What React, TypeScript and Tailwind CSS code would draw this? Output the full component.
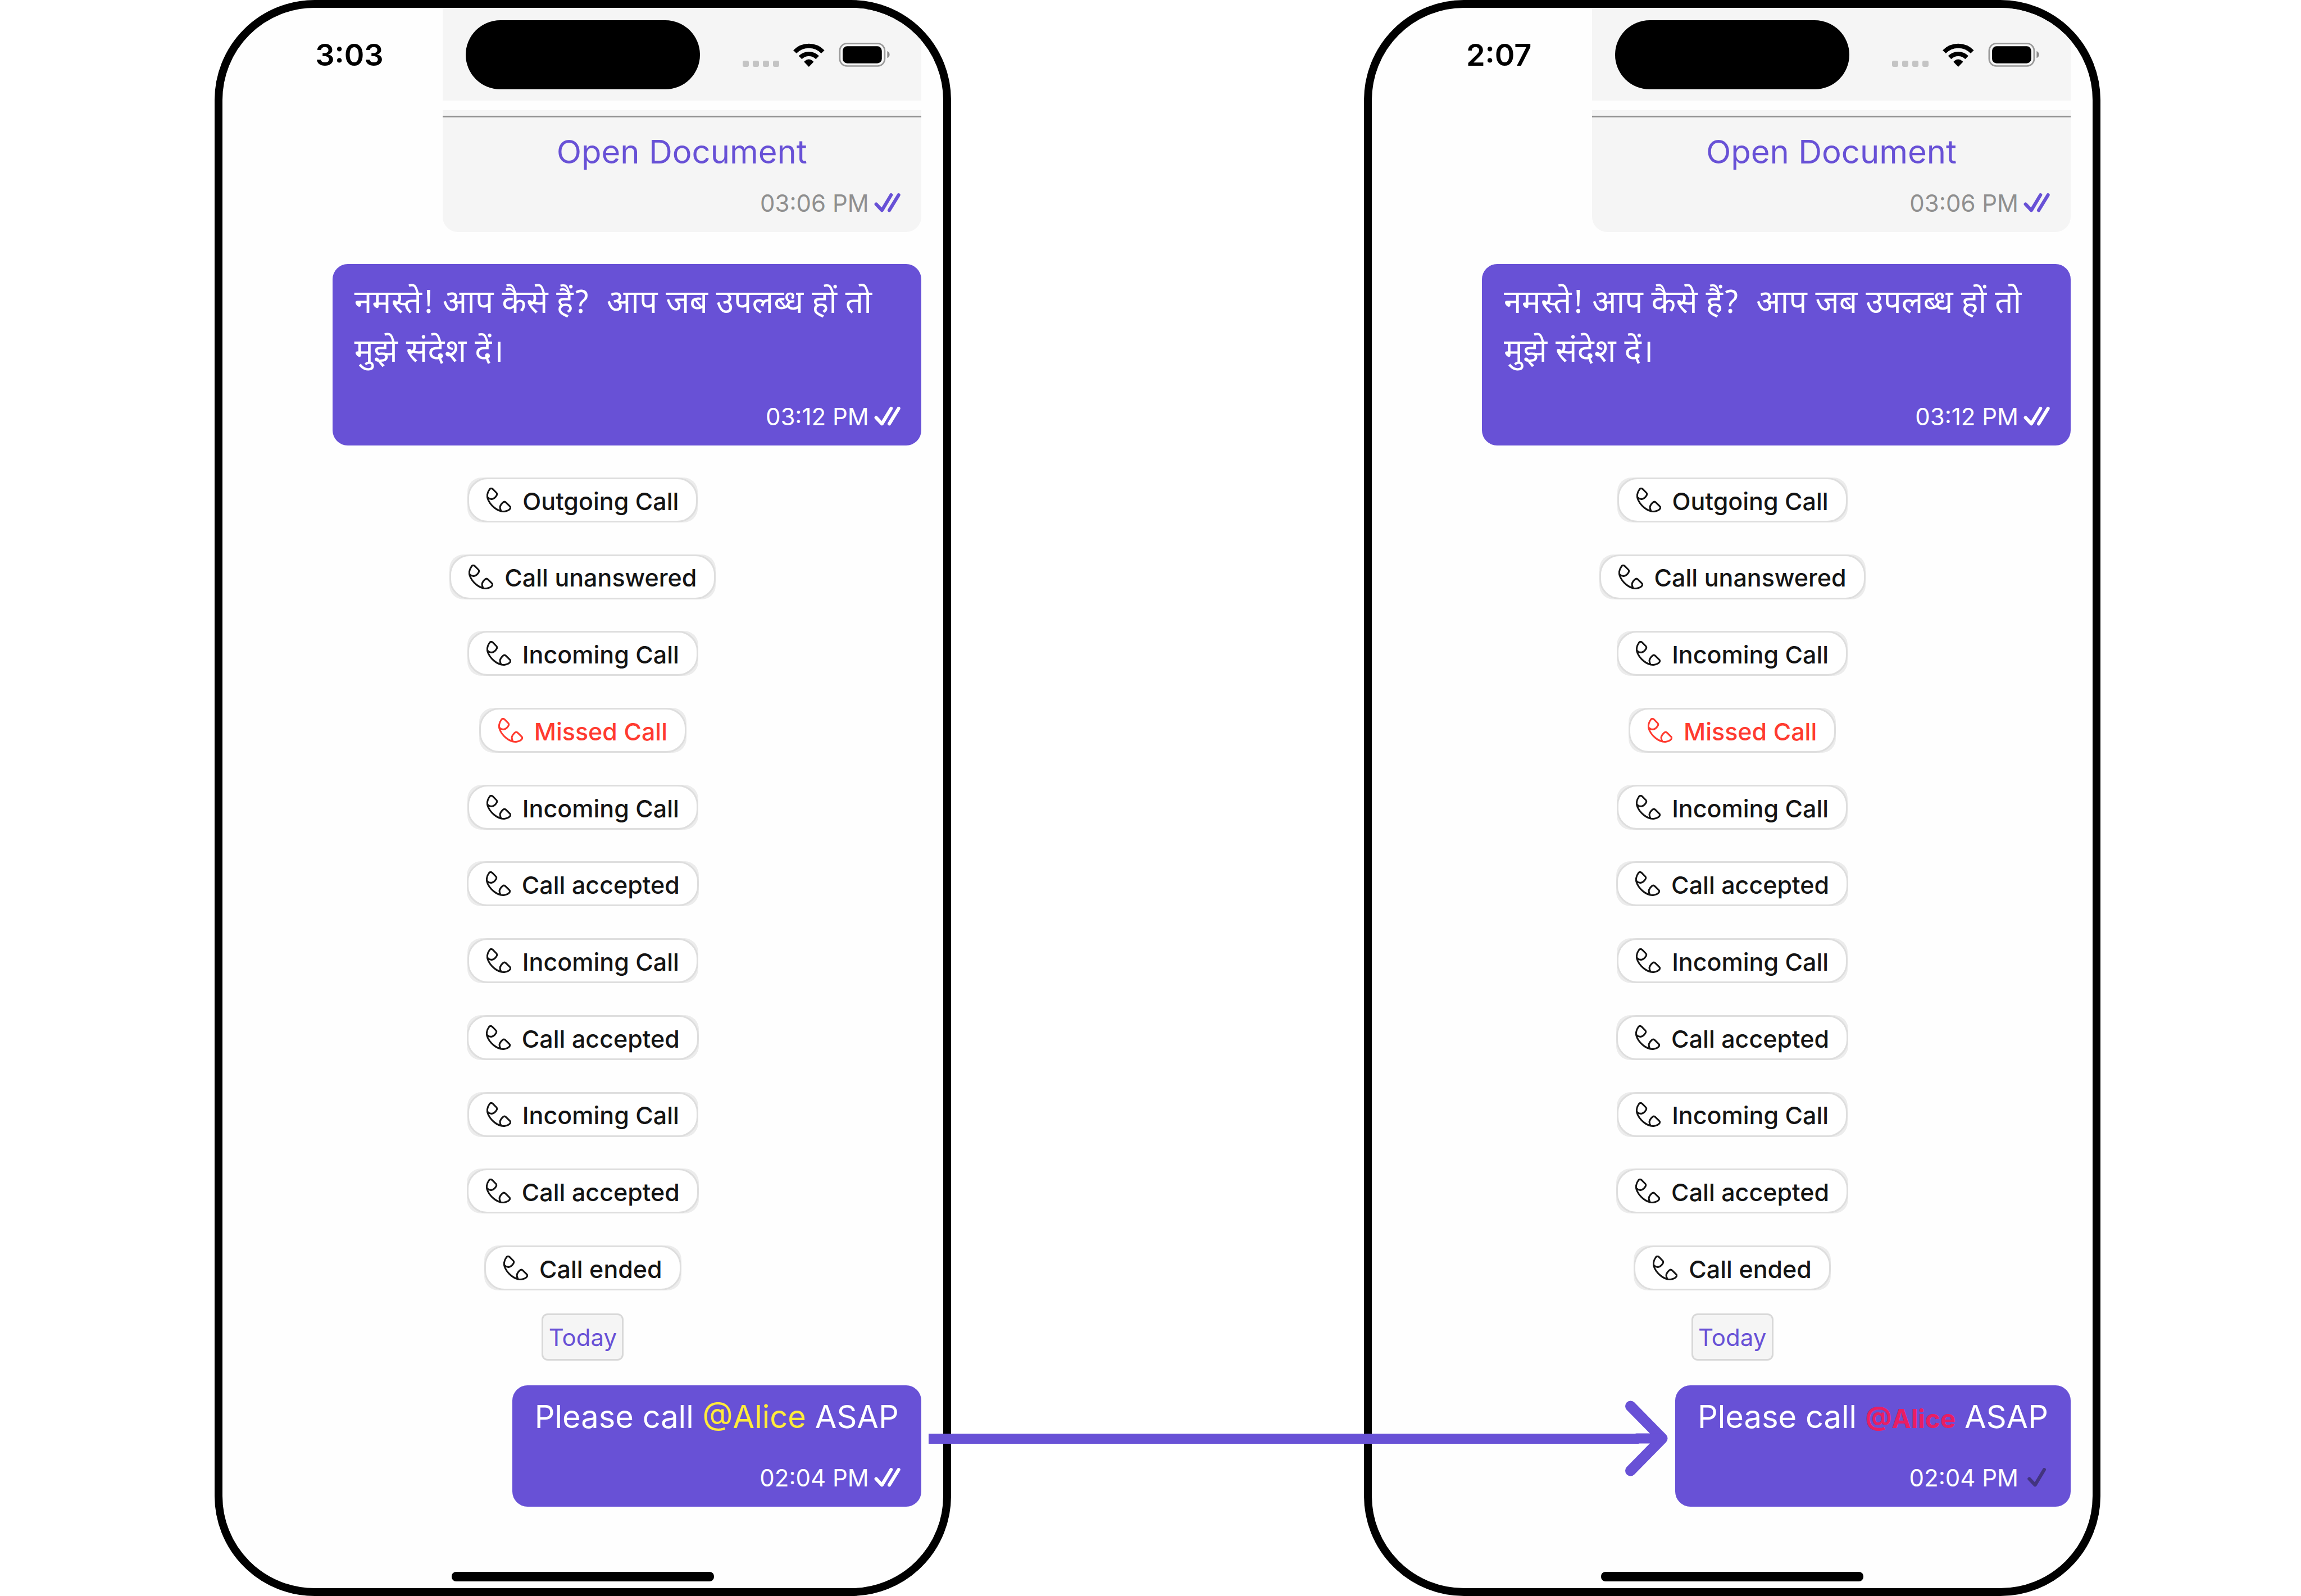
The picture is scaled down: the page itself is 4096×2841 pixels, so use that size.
import type { ReactNode } from "react";

type CallEvent = { label: string; missed?: boolean };

const calls: CallEvent[] = [
  { label: "Outgoing Call" },
  { label: "Call unanswered" },
  { label: "Incoming Call" },
  { label: "Missed Call", missed: true },
  { label: "Incoming Call" },
  { label: "Call accepted" },
  { label: "Incoming Call" },
  { label: "Call accepted" },
  { label: "Incoming Call" },
  { label: "Call accepted" },
  { label: "Call ended" },
];

function DoubleCheck() {
  return (
    <svg viewBox="0 0 155 112" className="h-[34px] w-[47px]" fill="none" stroke="currentColor" strokeWidth="20" strokeLinecap="round" strokeLinejoin="round" aria-label="Read" role="img">
      <path d="M12 64 46 100 100 10" />
      <path d="M89 100 144 10" />
    </svg>
  );
}

function SingleCheck() {
  return (
    <svg viewBox="-22 0 155 112" className="h-[34px] w-[47px]" fill="none" stroke="currentColor" strokeWidth="20" strokeLinecap="round" strokeLinejoin="round" aria-label="Sent" role="img">
      <path d="M12 64 46 100 100 10" />
    </svg>
  );
}

function PhoneIcon() {
  return (
    <svg viewBox="154 130 144 144" className="size-[44px]" fill="none" stroke="currentColor" strokeWidth="10" strokeLinecap="round" strokeLinejoin="round" aria-hidden="true">
      <path d="M163 188Q174 199 188 196 202 193 212 177 218 169 213 161L190 138Q180 130 172 140 154 165 160 190 168 220 200 247 228 270 258 269 285 265 292 252 297 244 288 237L268 217Q259 208 250 216 236 228 233 242 232 256 240 267" />
    </svg>
  );
}

function WifiIcon() {
  return (
    <svg viewBox="452 128 184 139" className="h-[42px] w-[56px]" fill="none" aria-label="Wi-Fi" role="img">
      <path d="M461 178.500A115 115 0 0 1 626 178.500" stroke="#000" strokeWidth="26" />
      <path d="M493 212A71 71 0 0 1 594 212" stroke="#000" strokeWidth="26" />
      <path d="M543.500 267 517 240Q514 236 519 233 543 212 568 233 573 236 570 240Z" fill="#000" />
    </svg>
  );
}

function BatteryIcon() {
  return (
    <svg viewBox="717 126 300 143" className="h-[43px] w-[91px]" fill="none" aria-label="Battery full" role="img">
      <rect x="722" y="131" width="266" height="133" rx="42" stroke="#999" strokeWidth="9" />
      <rect x="739" y="147" width="232" height="101" rx="27" fill="#000" />
      <path d="M1003 176Q1017 182 1017 196 1017 212 1003 217Z" fill="#8c8c8c" />
    </svg>
  );
}

function StatusBar({ time }: { time: string }) {
  return (
    <header className="grid h-[165px]">
      <div className="col-start-1 row-start-1 mr-[39px] w-[852px] justify-self-end bg-[#f5f5f5]" />
      <div className="col-start-1 row-start-1 grid grid-cols-[1fr_417px_1fr] items-center pt-[2px]">
        <time className="pl-[19px] text-center text-[54px] font-semibold text-black">{time}</time>
        <div className="h-[123px] rounded-full bg-black" />
        <div className="flex items-end justify-end gap-[25px] pr-[95px]">
          <div className="flex gap-[7px]">
            <span className="size-[11px] rounded-[3px] bg-[#c4c4c4]" />
            <span className="size-[11px] rounded-[3px] bg-[#c4c4c4]" />
            <span className="size-[11px] rounded-[3px] bg-[#c4c4c4]" />
            <span className="size-[11px] rounded-[3px] bg-[#c4c4c4]" />
          </div>
          <WifiIcon />
          <BatteryIcon />
        </div>
      </div>
    </header>
  );
}

function Receipt({ time, children }: { time: string; children: ReactNode }) {
  return (
    <div className="flex h-[68px] items-center justify-end gap-[9px] pr-[37px]">
      <time className="text-[42px]">{time}</time>
      {children}
    </div>
  );
}

function DocumentCard() {
  return (
    <article className="mr-[39px] mt-[17px] flex w-[852px] flex-col self-end rounded-b-[27px] bg-[#f5f5f5] pb-[18px] pt-[10px] text-[#8f8f8f]">
      <hr className="h-[3px] border-0 bg-[#929292]" />
      <button type="button" className="h-[118px] pt-1 text-[58px] text-[#6851d6]">
        Open Document
      </button>
      <Receipt time="03:06 PM">
        <span className="text-[#6851d6]"><DoubleCheck /></span>
      </Receipt>
    </article>
  );
}

function CallPill({ call }: { call: CallEvent }) {
  return (
    <li className="rounded-[25px] bg-[#ececec]">
      <div
        className={`flex h-[80px] items-center gap-[20px] rounded-[36px] border-[3px] border-[#dedede] bg-white px-[31px] ${
          call.missed ? "text-[#ff3b30]" : "text-[#141414]"
        }`}
      >
        <PhoneIcon />
        <span className="pt-1 text-[43px] font-medium">{call.label}</span>
      </div>
    </li>
  );
}

function Phone({ time, mention, receipt }: { time: string; mention: ReactNode; receipt: ReactNode }) {
  return (
    <section className="flex w-[32vw] flex-col overflow-hidden rounded-[178px] border-[14px] border-black bg-[#fefefe]">
      <StatusBar time={time} />
      <DocumentCard />
      <article className="mr-[39px] mt-[57px] w-[1048px] self-end rounded-[27px] bg-[#6851d6] pb-[18px] pt-[30px] text-white">
        <p lang="hi" className="mb-[33px] whitespace-pre-wrap px-[39px] font-['Noto_Sans_Devanagari','Noto_Sans',sans-serif] text-[57px] font-[380] leading-[87px]">
          नमस्ते! आप कैसे हैं?  आप जब उपलब्ध हों तो मुझे संदेश दें।
        </p>
        <Receipt time="03:12 PM"><DoubleCheck /></Receipt>
      </article>
      <ul className="mt-[57px] flex flex-1 flex-col items-center justify-between gap-[56px]">
        {calls.map((call, i) => (
          <CallPill key={i} call={call} />
        ))}
      </ul>
      <div className="mt-[41px] flex h-[84px] w-[146px] items-center justify-center self-center rounded-[11px] border-[3px] border-[#d8d8d8] bg-[#f5f5f5] text-[42px] text-[#6851d6]">
        Today
      </div>
      <article className="mr-[39px] mt-[44px] self-end rounded-[27px] bg-[#6851d6] pb-[18px] pt-[22px] text-white">
        <p className="mb-[40px] px-[40px] text-[56px] leading-[68px]">
          Please call {mention} ASAP
        </p>
        <Receipt time="02:04 PM">{receipt}</Receipt>
      </article>
      <div className="mb-[12px] mt-[116px] h-[17px] w-[467px] self-center rounded-[8px] bg-black" />
    </section>
  );
}

/* Joins the message on the first phone to the same message on the second. */
function Arrow() {
  return (
    <div className="absolute -left-[40px] -right-[541px] bottom-[213px] z-10 flex items-center text-[#6851d6]" aria-hidden="true">
      <div className="-mr-[24px] h-[18px] flex-1 bg-current" />
      <svg viewBox="0 0 76 135" className="h-[135px] w-[76px]" fill="none" stroke="currentColor" strokeWidth="19" strokeLinecap="round" strokeLinejoin="round">
        <path d="M9.500 10 66 67.500 9.500 125" />
        <path d="M20 67.500H60" strokeWidth="18" />
      </svg>
    </div>
  );
}

export default function App() {
  return (
    <main className="flex min-h-screen bg-white pl-[382px] pr-[357px] font-['Inter','Liberation_Sans',sans-serif]">
      <Phone
        time="3:03"
        mention={<a href="#alice" className="text-[#ffeb3b]">@Alice</a>}
        receipt={<DoubleCheck />}
      />
      <div className="relative flex-1">
        <Arrow />
      </div>
      <Phone
        time="2:07"
        mention={<a href="#alice" className="text-[46px] font-bold leading-none text-[#e91e63]">@Alice</a>}
        receipt={<span className="text-[#43347f]"><SingleCheck /></span>}
      />
    </main>
  );
}
